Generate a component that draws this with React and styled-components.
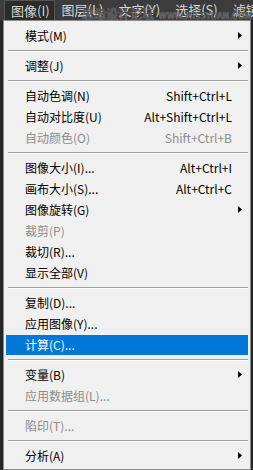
import React from "react";
import styled, { createGlobalStyle } from "styled-components";

const GlobalStyle = createGlobalStyle`
  html, body {
    margin: 0;
    padding: 0;
    background: #262626;
  }
  body {
    font-family: "Noto Sans CJK SC", "Liberation Sans", sans-serif;
  }
`;

const tabs = [
  { label: "图像(I)", active: true },
  { label: "图层(L)" },
  { label: "文字(Y)" },
  { label: "选择(S)" },
  { label: "滤镜" },
];

// sep: separator line, sub: has a submenu arrow
const items = [
  { label: "模式(M)", sub: true },
  { sep: true },
  { label: "调整(J)", sub: true },
  { sep: true },
  { label: "自动色调(N)", key: "Shift+Ctrl+L" },
  { label: "自动对比度(U)", key: "Alt+Shift+Ctrl+L" },
  { label: "自动颜色(O)", key: "Shift+Ctrl+B", disabled: true },
  { sep: true },
  { label: "图像大小(I)...", key: "Alt+Ctrl+I" },
  { label: "画布大小(S)...", key: "Alt+Ctrl+C" },
  { label: "图像旋转(G)", sub: true },
  { label: "裁剪(P)", disabled: true },
  { label: "裁切(R)..." },
  { label: "显示全部(V)" },
  { sep: true },
  { label: "复制(D)..." },
  { label: "应用图像(Y)..." },
  { label: "计算(C)...", active: true },
  { sep: true },
  { label: "变量(B)", sub: true },
  { label: "应用数据组(L)...", disabled: true },
  { sep: true },
  { label: "陷印(T)...", disabled: true },
  { sep: true },
  { label: "分析(A)", sub: true },
];

const App = () => {
  return (
    <Page>
      <GlobalStyle />
      <MenuBar>
        {tabs.map((t) => (
          <Tab key={t.label} active={t.active}>
            {t.label}
          </Tab>
        ))}
      </MenuBar>
      <Panel>
        {items.map((it, i) =>
          it.sep ? (
            <Separator key={i} />
          ) : (
            <Item key={i} active={it.active} disabled={it.disabled}>
              <span>{it.label}</span>
              <Shortcut>{it.key}</Shortcut>
              <Arrow>
                {it.sub && (
                  <svg width="4" height="7" viewBox="0 0 4 7">
                    <path d="M0 0 L4 3.5 L0 7 Z" fill="#000" />
                  </svg>
                )}
              </Arrow>
            </Item>
          )
        )}
      </Panel>
      <Watermark>
        思缘设计论坛 <small>WWW.MISSYUAN.COM</small>
      </Watermark>
    </Page>
  );
};

const Page = styled.div`
  position: relative;
  width: 253px;
  height: 470px;
  overflow: hidden;
  background: #262626;
`;

const MenuBar = styled.div`
  display: flex;
  align-items: stretch;
  height: 20px;
  padding-left: 4px;
  background: #3c3c3c;
  overflow: hidden;
`;

const Tab = styled.div`
  flex: none;
  padding: 0 8px 0 7px;
  font-size: 13px;
  line-height: 20px;
  color: #d6d6d6;
  white-space: nowrap;
  background: ${({ active }) => (active ? "#2b2b2b" : "transparent")};
  ${({ active }) =>
    active && `border: 1px solid #555; border-bottom: none; line-height: 19px; padding: 0 4px 0 6px;`}
`;

const Panel = styled.div`
  margin: 0 2px 0 3px;
  padding: 4px 2px 3px 2px;
  background: #f0f0f0;
  border: 1px solid #8a8a8a;
`;

const Item = styled.div`
  display: grid;
  grid-template-columns: 1fr auto 16px;
  align-items: center;
  height: 21px;
  padding-left: 19px;
  font-size: 12px;
  color: ${({ disabled }) => (disabled ? "#8d8d8d" : "#000")};
  ${({ active }) =>
    active &&
    `background: #0078d7; color: #fff; height: 20px; margin: 0.5px 0;`}
`;

const Shortcut = styled.span`
  text-align: right;
  font-size: 12px;
`;

const Arrow = styled.span`
  display: flex;
  justify-content: flex-end;
  padding-right: 6px;
`;

const Separator = styled.div`
  height: 0;
  margin: 4px 0 3px 2px;
  border-top: 1px solid #a0a0a0;
  border-bottom: 1px solid #fff;
`;

const Watermark = styled.div`
  position: absolute;
  top: 7px;
  left: 82px;
  font-size: 12px;
  line-height: 14px;
  color: #4a4a4a;
  text-shadow: 0 0 1px #bbb;
  white-space: nowrap;
  pointer-events: none;
  > small {
    font-family: "DejaVu Sans", sans-serif;
    font-size: 8px;
    margin-left: 2px;
    letter-spacing: 0.3px;
  }
`;

export default App;
